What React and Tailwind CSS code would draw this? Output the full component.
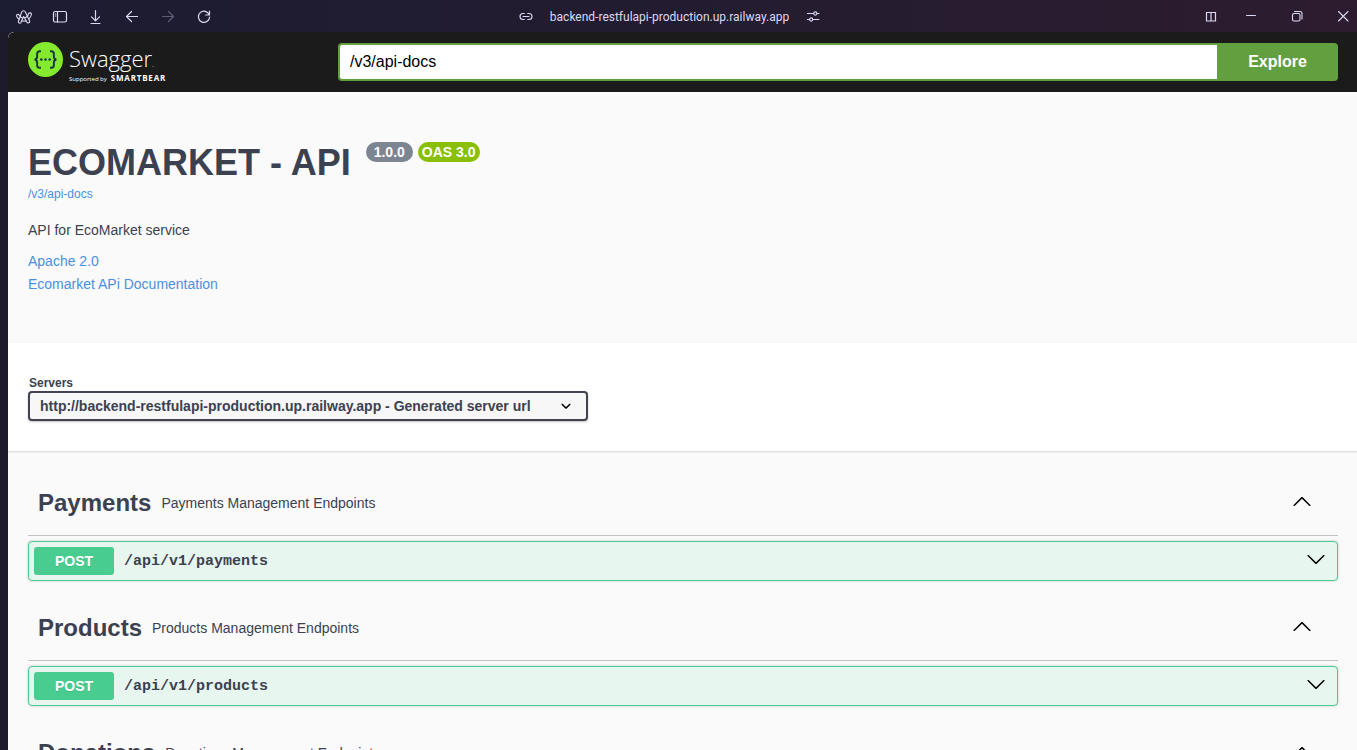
import React from "react";

const stroke = {
  fill: "none",
  stroke: "currentColor",
  strokeLinecap: "round",
  strokeLinejoin: "round",
};

function Icon({ children, width = 1.2 }) {
  return (
    <svg viewBox="0 0 16 16" className="size-4" strokeWidth={width} aria-hidden="true" {...stroke}>
      {children}
    </svg>
  );
}

function IconButton({ label, children, dim = false }) {
  return (
    <button type="button" aria-label={label} className={dim ? "text-[#625d77]" : "text-[#dcd8f2]"}>
      {children}
    </button>
  );
}

function BrowserBar() {
  return (
    <header className="grid h-8 shrink-0 grid-cols-[1fr_auto_1fr] items-center bg-linear-to-r from-[#1c1c32] via-[#231c30] to-[#2d1c2f] pr-[6px] pl-4 pt-px">
      <div className="flex items-center gap-5">
        <IconButton label="Arc menu">
          <Icon width={1.1}>
            <path d="M5.7 3C6.500 1.400 8.700 1.400 9.400 3l2 4.200c.6-.7.9-1.500 1.100-2.300.400-1.700 3.200-1.200 2.900.600-.4 1.800-1.400 3.400-2.700 4.600l.9 1.900c.6 1.700-1.900 2.800-2.700 1.200l-.7-1.400c-1.500.5-3 .5-4.500 0l-.600 1.400c-.9 1.700-3.300.6-2.600-1.200l.7-1.700C2.100 9.400 1.100 8.300.6 7.200c-.5-1.600 1.800-2.500 2.600-1.100l1 1.300z" />
            <path d="M4.200 7.400l-1 2.900M4.200 7.400c.5.700 1.200 1.200 2 1.500M11.400 7.200c-.7.900-1.600 1.500-2.600 1.700M5.700 11.800l1.900-4.300 2.500 4.300M11.400 7.200l1.300 2.900" />
          </Icon>
        </IconButton>
        <IconButton label="Toggle sidebar">
          <Icon>
            <rect x="1.500" y="2.500" width="13" height="10.500" rx="1.800" />
            <path d="M5.500 2.500v10.500M3.400 5h.4M3.400 7h.4" />
          </Icon>
        </IconButton>
        <IconButton label="Downloads">
          <Icon>
            <path d="M7.500 1.500v10M3.500 7.800l4 4 4-4M3 14.500h9" />
          </Icon>
        </IconButton>
        <IconButton label="Back">
          <Icon>
            <path d="M13.500 7.500H2.500M7.500 2.500l-5 5 5 5" />
          </Icon>
        </IconButton>
        <IconButton label="Forward" dim>
          <Icon>
            <path d="M2.500 7.500h11M8.500 2.500l5 5-5 5" />
          </Icon>
        </IconButton>
        <IconButton label="Reload">
          <Icon>
            <path d="M13.500 2v4H9.700M13.300 6A5.600 5.600 0 1 0 13.600 8" />
          </Icon>
        </IconButton>
      </div>
      <div className="mr-7 flex items-center gap-4 text-[#dcd8f2]">
        <Icon width={1.100}>
          <path d="M6.300 4.500H5a3 3 0 0 0 0 6h1.300M9.700 4.500H11a3 3 0 0 1 0 6H9.700M5 7.500h6" />
        </Icon>
        <span className="font-[Roboto,'Open_Sans',sans-serif] text-xs leading-4">
          backend-restfulapi-production.up.railway.app
        </span>
        <IconButton label="Site controls">
          <Icon width={1.100}>
            <path d="M2.500 4.500h6M12 4.500h2M2.500 10.500h1.800M8 10.500h6" />
            <circle cx="10.300" cy="4.500" r="1.600" />
            <circle cx="6.200" cy="10.500" r="1.600" />
          </Icon>
        </IconButton>
      </div>
      <div className="flex items-center justify-end gap-6">
        <IconButton label="Split view">
          <Icon>
            <path d="M3.500 3.500h9v8.500h-9zM8 3.500v8.500" strokeLinejoin="miter" />
          </Icon>
        </IconButton>
        <div className="flex items-center gap-[30px]">
          <IconButton label="Minimize">
            <Icon width={1}>
              <path d="M3.500 6.500h9" />
            </Icon>
          </IconButton>
          <IconButton label="Restore">
            <Icon width={1.100}>
              <rect x="3.500" y="4.500" width="7.500" height="7.500" rx="1.400" />
              <path d="M5.500 2.500h5.500a2 2 0 0 1 2 2v5.500" />
            </Icon>
          </IconButton>
          <IconButton label="Close">
            <Icon width={1.100}>
              <path d="M3.500 2.500l9.500 9.500M13 2.500l-9.500 9.500" />
            </Icon>
          </IconButton>
        </div>
      </div>
    </header>
  );
}

function Logo() {
  return (
    <a href="#top" className="flex w-[310px] shrink-0 items-start gap-[6px] text-white">
      <svg viewBox="0 0 36 36" className="size-[35px]" aria-hidden="true">
        <circle cx="18" cy="18" r="18" fill="#85ea2d" />
        <g fill="none" stroke="#173647" strokeWidth="2">
          <path d="M13.300 9.500h-1.200c-1.900 0-2.700.900-2.700 2.600v2.700c0 1.900-.600 2.900-2.600 3.200 2 .300 2.600 1.300 2.600 3.200v2.700c0 1.700.800 2.600 2.700 2.600h1.200" />
          <path d="M22.700 9.500h1.200c1.900 0 2.700.900 2.700 2.600v2.700c0 1.900.600 2.900 2.600 3.200-2 .300-2.600 1.300-2.600 3.200v2.700c0 1.700-.800 2.600-2.700 2.600h-1.200" />
        </g>
        <g fill="#173647">
          <circle cx="13.700" cy="18" r="1.300" />
          <circle cx="18" cy="18" r="1.300" />
          <circle cx="22.300" cy="18" r="1.300" />
        </g>
      </svg>
      <span className="flex flex-col pt-1 font-['Open_Sans',sans-serif]">
        <span className="flex items-baseline text-[22px] leading-6 font-light">
          Swagger<span className="text-[8px] leading-none">.</span>
        </span>
        <span className="mt-1 flex items-baseline gap-1 text-[6px] leading-2">
          Supported by <b className="text-[8px] font-bold tracking-widest">SMARTBEAR</b>
        </span>
      </span>
    </a>
  );
}

function TopBar() {
  return (
    <div className="flex h-[60px] items-start rounded-tl-md bg-[#1b1b1b] pt-[10px] pr-[19px] pl-5">
      <Logo />
      <form className="mt-px flex h-[38px] flex-1" onSubmit={(e) => e.preventDefault()}>
        <input
          type="text"
          aria-label="API definition URL"
          defaultValue="/v3/api-docs"
          className="min-w-0 flex-1 rounded-l border-2 border-r-0 border-[#62a03f] bg-white px-[10px] text-base text-black outline-none"
        />
        <button type="submit" className="w-[121px] rounded-r bg-[#62a03f] text-base font-bold text-white">
          Explore
        </button>
      </form>
    </div>
  );
}

function Info() {
  return (
    <section className="h-[251px] px-5 pt-[47px]">
      <div className="flex items-start">
        <h1 className="text-4xl leading-[48px] font-bold">ECOMARKET - API</h1>
        <div className="mt-[3px] ml-[15px] flex gap-[5px] text-sm leading-5 font-bold text-white">
          <span className="rounded-full bg-[#7d8492] px-2">1.0.0</span>
          <span className="rounded-full bg-[#89bf04] px-1">OAS 3.0</span>
        </div>
      </div>
      <a href="#docs" className="block text-xs leading-[14px] text-[#4990e2]">
        /v3/api-docs
      </a>
      <p className="mt-[19px] text-sm leading-5">API for EcoMarket service</p>
      <div className="mt-[10px] flex flex-col items-start text-sm leading-[23px] text-[#4990e2]">
        <a href="#license">Apache 2.0</a>
        <a href="#documentation">Ecomarket APi Documentation</a>
      </div>
    </section>
  );
}

function Servers() {
  return (
    <section className="bg-white px-5 pt-8 pb-[30px] shadow-[0_1px_2px_0_rgba(0,0,0,0.15)]">
      <label htmlFor="servers" className="block px-px text-xs leading-4 font-bold">
        Servers
      </label>
      <div className="relative w-[560px] max-w-full">
        <select
          id="servers"
          className="block h-[30px] w-full appearance-none rounded border-2 border-[#41444e] bg-[#f7f7f7] pr-10 pl-[10px] text-sm font-bold shadow-[0_1px_2px_0_rgba(0,0,0,0.25)]"
        >
          <option>http://backend-restfulapi-production.up.railway.app - Generated server url</option>
        </select>
        <svg viewBox="0 0 20 20" className="pointer-events-none absolute top-[5px] right-3 size-5" aria-hidden="true">
          <path d="M13.418 7.859c.271-.268.709-.268.978 0 .27.268.272.701 0 .969l-3.908 3.83c-.27.268-.707.268-.979 0l-3.908-3.830c-.27-.267-.27-.701 0-.969.271-.268.709-.268.978 0L10 11l3.418-3.141z" />
        </svg>
      </div>
    </section>
  );
}

function Chevron({ up = false }) {
  return (
    <svg viewBox="0 0 20 20" className="size-5 shrink-0 text-black" fill="currentColor" aria-hidden="true">
      {up ? (
        <path d="M 17.418 14.908 C 17.69 15.176 18.127 15.176 18.397 14.908 C 18.667 14.64 18.668 14.207 18.397 13.939 L 10.489 6.109 C 10.219 5.841 9.782 5.841 9.51 6.109 L 1.602 13.939 C 1.332 14.207 1.332 14.64 1.602 14.908 C 1.873 15.176 2.311 15.176 2.581 14.908 L 10 7.767 L 17.418 14.908 Z" />
      ) : (
        <path d="M17.418 6.109c.272-.268.709-.268.979 0s.271.701 0 .969l-7.908 7.83c-.27.268-.707.268-.979 0l-7.908-7.830c-.27-.268-.27-.701 0-.969.271-.268.709-.268.979 0L10 13.250l7.418-7.141z" />
      )}
    </svg>
  );
}

function Tag({ name, path }) {
  return (
    <section>
      <div className="flex h-[61px] items-center border-b border-[rgba(59,65,81,0.3)] pr-[26px] pb-1 pl-[10px]">
        <h2 className="text-2xl leading-8 font-bold">{name}</h2>
        <p className="flex-1 px-[10px] text-sm leading-5">{name} Management Endpoints</p>
        <button type="button" className="pb-1" aria-label={`Collapse ${name}`}>
          <Chevron up />
        </button>
      </div>
      <button
        type="button"
        className="mt-[5px] mb-[19px] flex h-10 w-full items-center rounded border border-[#49cc90] bg-[#e8f6f0] pr-[11px] pl-[5px] text-left shadow-[0_0_3px_rgba(0,0,0,0.19)]"
      >
        <span className="w-20 rounded-[3px] bg-[#49cc90] text-center text-sm leading-7 font-bold text-white text-shadow-[0_1px_0_rgba(0,0,0,0.1)]">
          POST
        </span>
        <span className="flex-1 px-[10px] pt-[2px] font-['Liberation_Mono',monospace] text-[15px] leading-5 font-bold">{path}</span>
        <span className="pb-1">
          <Chevron />
        </span>
      </button>
    </section>
  );
}

const tags = [
  { name: "Payments", path: "/api/v1/payments" },
  { name: "Products", path: "/api/v1/products" },
  { name: "Donations", path: "/api/v1/donations" },
];

export default function App() {
  return (
    <div id="top" className="flex h-screen flex-col overflow-hidden bg-[#1d1a2b] font-['Liberation_Sans',Arial,sans-serif] text-[#3b4151]">
      <BrowserBar />
      <main className="ml-2 min-h-0 flex-1 overflow-hidden rounded-tl-md bg-[#fafafa]">
        <TopBar />
        <Info />
        <Servers />
        <div className="pt-6 pr-[19px] pl-5">
          {tags.map((tag) => (
            <Tag key={tag.name} {...tag} />
          ))}
        </div>
      </main>
    </div>
  );
}
